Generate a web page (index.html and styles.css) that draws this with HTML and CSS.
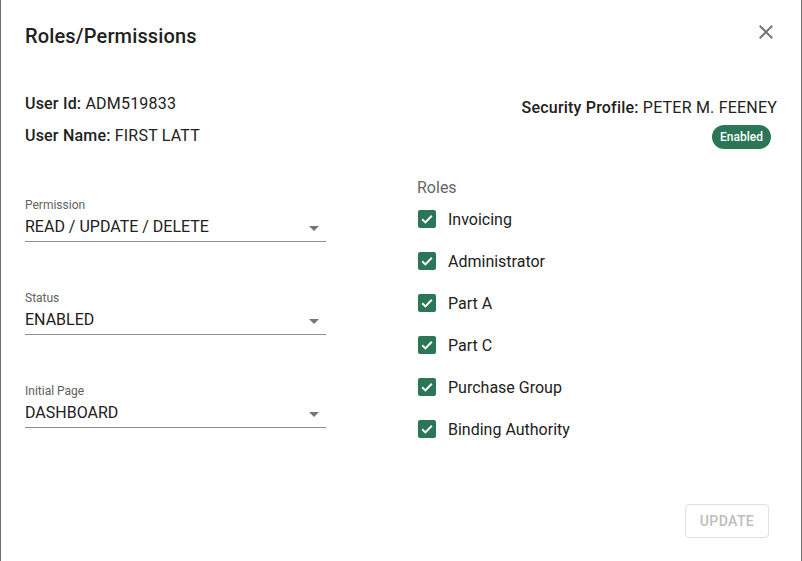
FILE: index.html
```html
<!DOCTYPE html>
<html>
<head>
<meta charset="utf-8">
<link rel="stylesheet" href="styles.css">
</head>
<body>
<div class="dialog">
  <div class="header">
    <h2 class="title">Roles/Permissions</h2>
    <button class="close" aria-label="close">
      <svg width="24" height="24" viewBox="0 0 24 24"><path d="M19 6.41 17.59 5 12 10.59 6.41 5 5 6.41 10.59 12 5 17.59 6.41 19 12 13.41 17.59 19 19 17.59 13.41 12z" fill="#757575"/></svg>
    </button>
  </div>
  <div class="info">
    <div class="info-left">
      <div class="line"><b>User Id:</b> ADM519833</div>
      <div class="line"><b>User Name:</b> FIRST LATT</div>
    </div>
    <div class="info-right">
      <div class="line"><b>Security Profile:</b> PETER M. FEENEY</div>
      <span class="chip">Enabled</span>
    </div>
  </div>
  <div class="main">
    <div class="fields">
      <div class="field">
        <div class="label">Permission</div>
        <div class="select"><span>READ / UPDATE / DELETE</span><i class="arrow"></i></div>
      </div>
      <div class="field">
        <div class="label">Status</div>
        <div class="select"><span>ENABLED</span><i class="arrow"></i></div>
      </div>
      <div class="field">
        <div class="label">Initial Page</div>
        <div class="select"><span>DASHBOARD</span><i class="arrow"></i></div>
      </div>
    </div>
    <div class="roles">
      <div class="roles-label">Roles</div>
      <div class="role"><span class="box"><svg width="18" height="18" viewBox="0 0 18 18"><path d="M4.2 9.3 7.4 12.4 13.8 5.8" fill="none" stroke="#fff" stroke-width="2"/></svg></span>Invoicing</div>
      <div class="role"><span class="box"><svg width="18" height="18" viewBox="0 0 18 18"><path d="M4.2 9.3 7.4 12.4 13.8 5.8" fill="none" stroke="#fff" stroke-width="2"/></svg></span>Administrator</div>
      <div class="role"><span class="box"><svg width="18" height="18" viewBox="0 0 18 18"><path d="M4.2 9.3 7.4 12.4 13.8 5.8" fill="none" stroke="#fff" stroke-width="2"/></svg></span>Part A</div>
      <div class="role"><span class="box"><svg width="18" height="18" viewBox="0 0 18 18"><path d="M4.2 9.3 7.4 12.4 13.8 5.8" fill="none" stroke="#fff" stroke-width="2"/></svg></span>Part C</div>
      <div class="role"><span class="box"><svg width="18" height="18" viewBox="0 0 18 18"><path d="M4.2 9.3 7.4 12.4 13.8 5.8" fill="none" stroke="#fff" stroke-width="2"/></svg></span>Purchase Group</div>
      <div class="role"><span class="box"><svg width="18" height="18" viewBox="0 0 18 18"><path d="M4.2 9.3 7.4 12.4 13.8 5.8" fill="none" stroke="#fff" stroke-width="2"/></svg></span>Binding Authority</div>
    </div>
  </div>
  <div class="footer">
    <button class="update" disabled>UPDATE</button>
  </div>
</div>
</body>
</html>
```

FILE: styles.css
```css
* { box-sizing: border-box; }
html, body { margin: 0; padding: 0; height: 100%; }
body {
  background: #6e6e6e;
  font-family: Roboto, "Liberation Sans", sans-serif;
  color: #212121;
  padding: 0 1px;
}
.dialog {
  background: #fff;
  height: 561px;
  padding: 0 24px;
  display: flex;
  flex-direction: column;
}
.header {
  display: flex;
  justify-content: space-between;
  align-items: flex-start;
  padding-top: 24px;
}
.title {
  margin: 0;
  font-size: 20px;
  line-height: 24px;
  font-weight: 500;
  letter-spacing: 0.15px;
  color: #212121;
}
.close {
  border: 0;
  background: none;
  padding: 0;
  width: 24px;
  height: 24px;
  margin-top: -4px;
  margin-right: -1px;
  cursor: pointer;
}
.close svg { display: block; }
.info {
  margin-top: 46px;
  display: flex;
  justify-content: space-between;
  font-size: 16px;
  letter-spacing: 0.2px;
}
.line { line-height: 20px; }
.line b { font-weight: 500; }
.info-left { display: flex; flex-direction: column; gap: 12px; }
.info-right {
  margin-top: 4px;
  display: flex;
  flex-direction: column;
  align-items: flex-end;
}
.chip {
  margin-top: 7px;
  margin-right: 6px;
  background: #2b7656;
  color: #fff;
  font-size: 12px;
  font-weight: 500;
  letter-spacing: 0;
  height: 24px;
  line-height: 24px;
  padding: 0 8px;
  border-radius: 12px;
}
.main {
  margin-top: 27px;
  display: grid;
  grid-template-columns: 301px 1fr;
  column-gap: 91px;
}
.fields {
  padding-top: 21px;
  display: flex;
  flex-direction: column;
  gap: 48px;
}
.label {
  font-size: 12px;
  line-height: 16px;
  color: #616161;
}
.select {
  margin-top: 2px;
  display: flex;
  justify-content: space-between;
  align-items: center;
  font-size: 16px;
  line-height: 24px;
  padding-bottom: 2px;
  border-bottom: 1px solid #8f8f8f;
}
.arrow {
  width: 0;
  height: 0;
  border-left: 5px solid transparent;
  border-right: 5px solid transparent;
  border-top: 5px solid #757575;
  margin-right: 7px;
  margin-top: 2px;
}
.roles-label {
  font-size: 16px;
  line-height: 24px;
  color: #666;
  margin-bottom: -2px;
}
.role {
  height: 42px;
  display: flex;
  align-items: center;
  font-size: 16px;
  color: #212121;
  margin-left: 1px;
}
.box {
  width: 18px;
  height: 18px;
  border-radius: 2px;
  background: #2b7656;
  margin-right: 12px;
}
.box svg { display: block; }
.footer {
  margin-top: auto;
  margin-bottom: 23px;
  display: flex;
  justify-content: flex-end;
  padding-right: 8px;
}
.update {
  width: 84px;
  height: 34px;
  background: #fff;
  border: 1px solid #e0e0e0;
  border-radius: 4px;
  color: #bdbdbd;
  font-family: Roboto, "Liberation Sans", sans-serif;
  font-size: 14px;
  font-weight: 500;
  letter-spacing: 0.4px;
}
```
